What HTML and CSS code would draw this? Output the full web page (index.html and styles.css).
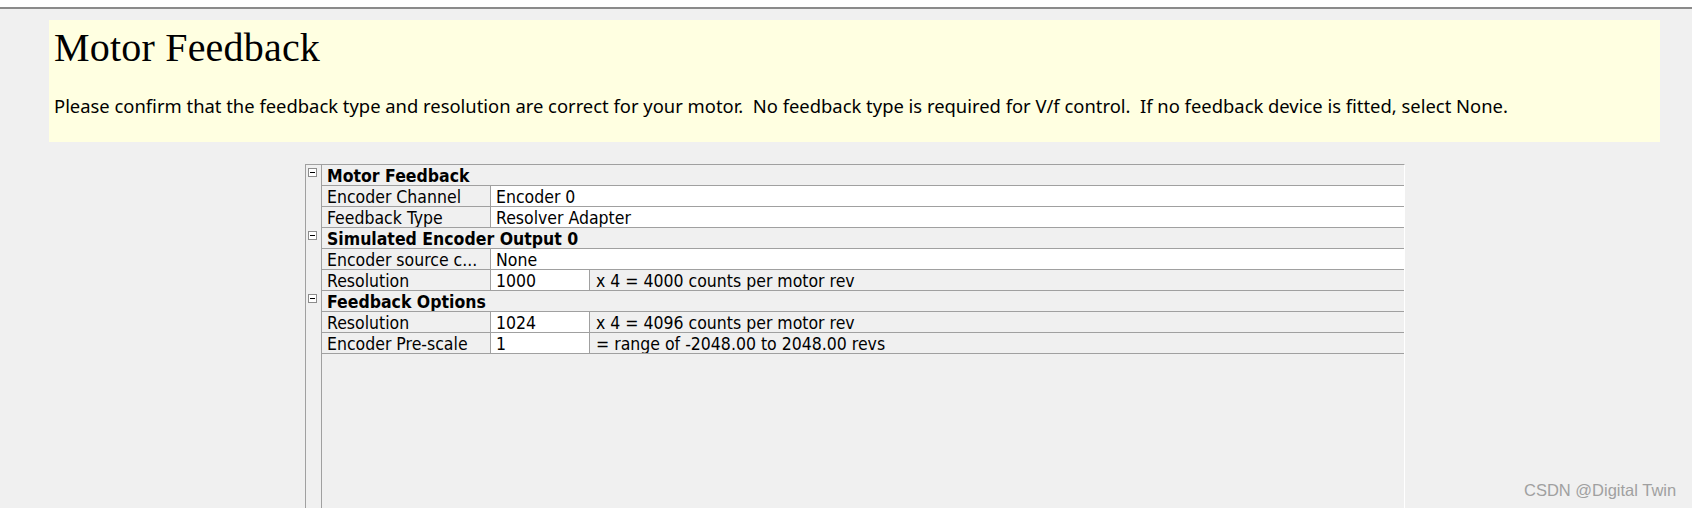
FILE: index.html
```html
<!DOCTYPE html>
<html>
<head>
<meta charset="utf-8">
<link rel="stylesheet" href="styles.css">
</head>
<body>
<div class="topbar"></div>
<div class="page">
  <div class="intro">
    <h1 class="title">Motor Feedback</h1>
    <p class="desc">Please confirm that the feedback type and resolution are correct for your motor.  No feedback type is required for V/f control.  If no feedback device is fitted, select None.</p>
  </div>
  <div class="grid">
    <div class="row head">
      <div class="gut"><span class="toggle"></span></div>
      <div class="cells"><div class="cat">Motor Feedback</div></div>
    </div>
    <div class="row">
      <div class="gut"></div>
      <div class="cells"><div class="label">Encoder Channel</div><div class="val wide">Encoder 0</div></div>
    </div>
    <div class="row">
      <div class="gut"></div>
      <div class="cells"><div class="label">Feedback Type</div><div class="val wide">Resolver Adapter</div></div>
    </div>
    <div class="row head">
      <div class="gut"><span class="toggle"></span></div>
      <div class="cells"><div class="cat">Simulated Encoder Output 0</div></div>
    </div>
    <div class="row">
      <div class="gut"></div>
      <div class="cells"><div class="label">Encoder source c...</div><div class="val wide">None</div></div>
    </div>
    <div class="row">
      <div class="gut"></div>
      <div class="cells"><div class="label">Resolution</div><div class="val">1000</div><div class="extra">x 4 = 4000 counts per motor rev</div></div>
    </div>
    <div class="row head">
      <div class="gut"><span class="toggle"></span></div>
      <div class="cells"><div class="cat">Feedback Options</div></div>
    </div>
    <div class="row">
      <div class="gut"></div>
      <div class="cells"><div class="label">Resolution</div><div class="val">1024</div><div class="extra">x 4 = 4096 counts per motor rev</div></div>
    </div>
    <div class="row">
      <div class="gut"></div>
      <div class="cells"><div class="label">Encoder Pre-scale</div><div class="val">1</div><div class="extra">= range of -2048.00 to 2048.00 revs</div></div>
    </div>
    <div class="filler">
      <div class="gut"></div>
      <div class="cells-empty"></div>
    </div>
  </div>
  <div class="watermark">CSDN @Digital Twin</div>
</div>
</body>
</html>
```

FILE: styles.css
```css
html, body {
  margin: 0;
  padding: 0;
  height: 100%;
  overflow: hidden;
  background: #f0f0f0;
}
.topbar {
  height: 7px;
  background: #ffffff;
  border-bottom: 2px solid #8a8a8a;
}
.page {
  position: relative;
  height: 499px;
  display: flex;
  flex-direction: column;
  padding-top: 11px;
  box-sizing: border-box;
}
.intro {
  margin-left: 49px;
  width: 1611px;
  height: 122px;
  background: #ffffe1;
  box-sizing: border-box;
  padding: 0 0 0 5px;
}
.title {
  margin: 0;
  font-family: "Liberation Serif", serif;
  font-weight: normal;
  font-size: 40px;
  line-height: 40px;
  padding-top: 8px;
  letter-spacing: 0.2px;
  color: #000;
}
.desc {
  margin: 0;
  margin-top: 26px;
  font-family: "Noto Sans", sans-serif;
  font-size: 18.4px;
  line-height: 24px;
  white-space: pre;
  color: #000;
}
.grid {
  margin-left: 305px;
  margin-top: 22px;
  width: 1100px;
  flex: 1;
  box-sizing: border-box;
  border-top: 1px solid #a0a0a0;
  border-left: 1px solid #a0a0a0;
  border-right: 1px solid #ffffff;
  display: flex;
  flex-direction: column;
  font-family: "DejaVu Sans Condensed", "DejaVu Sans", sans-serif;
  font-size: 17.5px;
  color: #000;
}
.row {
  display: flex;
  height: 21px;
  flex: none;
}
.gut {
  width: 15px;
  flex: none;
  position: relative;
}
.toggle {
  position: absolute;
  left: 2px;
  top: 3px;
  width: 7px;
  height: 7px;
  border: 1px solid #8c8c8c;
  background: #ffffff;
}
.toggle::after {
  content: "";
  position: absolute;
  left: 1px;
  top: 3px;
  width: 5px;
  height: 1px;
  background: #000;
}
.cells {
  flex: 1;
  display: flex;
  border-left: 1px solid #a0a0a0;
  border-bottom: 1px solid #a0a0a0;
  line-height: 22px;
  white-space: nowrap;
  overflow: hidden;
}
.cat {
  font-weight: bold;
  padding-left: 5px;
}
.label {
  width: 163px;
  flex: none;
  padding-left: 5px;
  border-right: 1px solid #a0a0a0;
}
.val {
  width: 93px;
  flex: none;
  padding-left: 5px;
  background: #ffffff;
  border-right: 1px solid #a0a0a0;
}
.val.wide {
  flex: 1;
  border-right: none;
}
.extra {
  flex: 1;
  padding-left: 6px;
}
.filler {
  flex: 1;
  display: flex;
}
.cells-empty {
  flex: 1;
  border-left: 1px solid #a0a0a0;
}
.watermark {
  position: absolute;
  left: 1524px;
  top: 471px;
  font-family: "Liberation Sans", Arial, sans-serif;
  font-size: 16.5px;
  color: #a0a0a0;
  line-height: 20px;
}
```
